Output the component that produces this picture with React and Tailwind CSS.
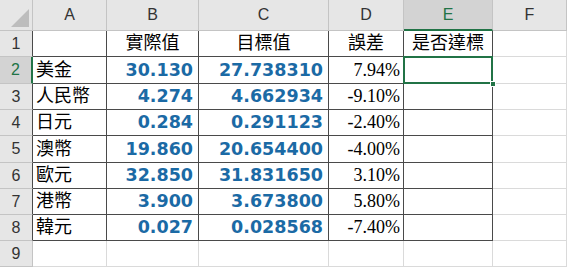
import React from 'react';

const cols = ['A', 'B', 'C', 'D', 'E', 'F'];

const rows = [
  ['', '實際值', '目標值', '誤差', '是否達標'],
  ['美金', '30.130', '27.738310', '7.94%', ''],
  ['人民幣', '4.274', '4.662934', '-9.10%', ''],
  ['日元', '0.284', '0.291123', '-2.40%', ''],
  ['澳幣', '19.860', '20.654400', '-4.00%', ''],
  ['歐元', '32.850', '31.831650', '3.10%', ''],
  ['港幣', '3.900', '3.673800', '5.80%', ''],
  ['韓元', '0.027', '0.028568', '-7.40%', ''],
];

const cjk = "font-['Liberation_Serif','Noto_Sans_CJK_TC',serif]";

function Cell({ r, c, value, active }) {
  // r: 0-based data row index, c: 0..5 (A..F)
  const inTable = r < 8 && c < 5;
  const border = inTable ? 'border-[#4a4a4a]' : 'border-[#dadada]';
  let content = null;
  if (inTable && value) {
    if (r === 0) {
      content = (
        <div className={`w-full text-center text-[18px] text-black ${cjk}`}>{value}</div>
      );
    } else if (c === 0) {
      content = <div className={`pl-[3px] text-[18px] text-black ${cjk}`}>{value}</div>;
    } else if (c === 3) {
      content = (
        <div className="w-full pr-[3px] text-right font-['Liberation_Serif',serif] text-[18px] text-black">
          {value}
        </div>
      );
    } else {
      content = (
        <div className="w-full pr-[5px] text-right font-['DejaVu_Sans',sans-serif] text-[17.5px] font-bold text-[#1b6aa5]">
          {value}
        </div>
      );
    }
  }
  return (
    <div
      className={`relative flex items-center whitespace-nowrap bg-white border-r border-b ${border} ${
        active ? 'z-10' : ''
      }`}
    >
      {content}
      {active && (
        <>
          {/* active cell outline + fill handle */}
          <div className="absolute -top-px -left-px -right-px -bottom-px border-2 border-[#217346]" />
          <div className="absolute -right-[4px] -bottom-[4px] h-[6px] w-[6px] border border-white bg-[#217346]" />
        </>
      )}
    </div>
  );
}

export default function App() {
  const heights = [26, 27, 26, 26, 27, 26, 26, 26, 26];
  return (
    <div className="h-[267px] w-[567px] overflow-hidden bg-white">
      <div
        className="grid grid-cols-[33px_74px_92px_130px_75px_89px_1fr]"
        style={{ gridTemplateRows: `31px ${heights.map((h) => h + 'px').join(' ')}` }}
      >
        {/* corner */}
        <div className="flex items-end justify-end border-r border-b border-[#c4c4c4] bg-[#e6e6e6] p-[3px]">
          <svg width="18" height="18" viewBox="0 0 18 18">
            <polygon points="18,0 18,18 0,18" fill="#bdbdbd" />
          </svg>
        </div>
        {cols.map((c) => {
          const sel = c === 'E';
          return (
            <div
              key={c}
              className={`flex items-center justify-center font-['Liberation_Sans',sans-serif] text-[16px] ${
                sel
                  ? 'border-r border-r-[#c4c4c4] border-b-2 border-b-[#217346] bg-[#d3d3d3] text-[#217346]'
                  : 'border-r border-b border-[#c4c4c4] bg-[#e6e6e6] text-[#333]'
              }`}
            >
              {c}
            </div>
          );
        })}
        {heights.map((h, r) => {
          const sel = r === 1;
          const inTable = r < 8;
          return (
            <React.Fragment key={r}>
              <div
                className={`flex items-center justify-center font-['Liberation_Sans',sans-serif] text-[16px] border-b border-b-[#c4c4c4] ${
                  sel
                    ? 'border-r-2 border-r-[#217346] bg-[#d3d3d3] text-[#217346]'
                    : inTable
                    ? 'border-r border-r-[#4a4a4a] bg-[#e6e6e6] text-[#333]'
                    : 'border-r border-r-[#c4c4c4] bg-[#e6e6e6] text-[#333]'
                }`}
              >
                {r + 1}
              </div>
              {cols.map((c, ci) => (
                <Cell
                  key={c}
                  r={r}
                  c={ci}
                  value={rows[r] ? rows[r][ci] : ''}
                  active={r === 1 && ci === 4}
                />
              ))}
            </React.Fragment>
          );
        })}
      </div>
    </div>
  );
}
